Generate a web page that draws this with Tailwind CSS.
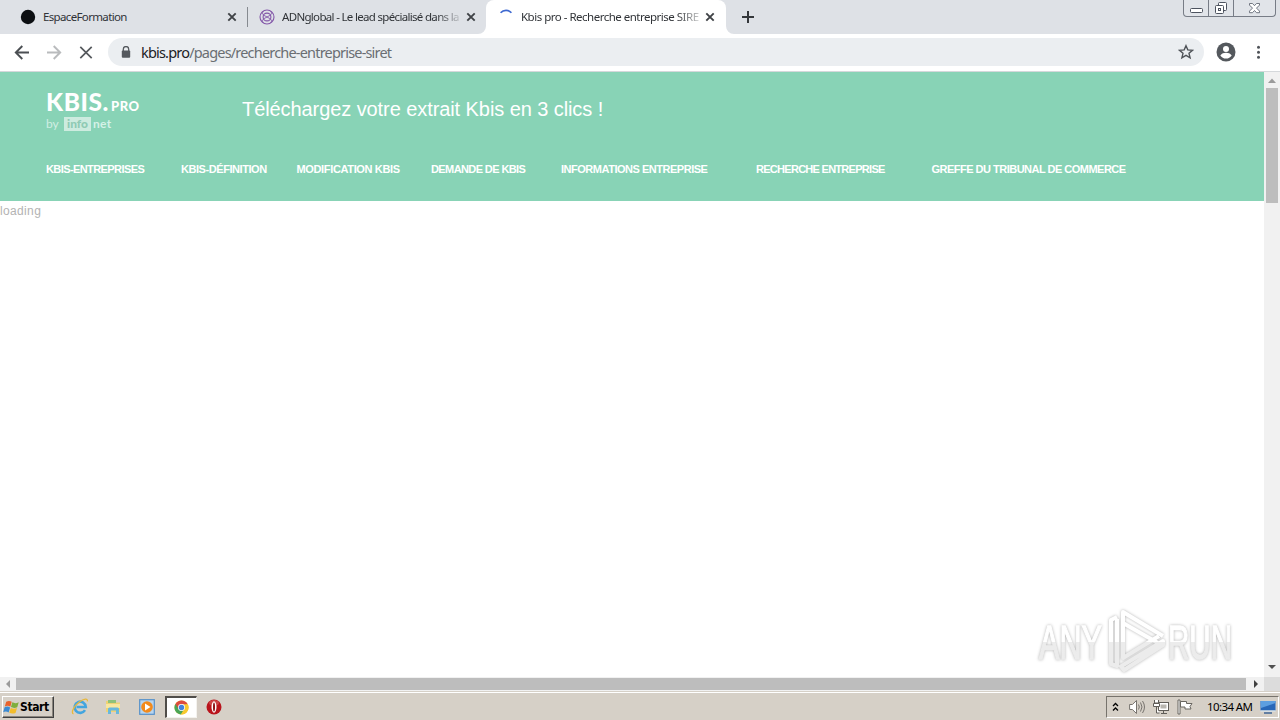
<!DOCTYPE html>
<html lang="fr">
<head>
<meta charset="utf-8">
<title>Kbis pro - Recherche entreprise SIRET</title>
<script src="https://cdn.jsdelivr.net/npm/@tailwindcss/browser@4"></script>
</head>
<body class="w-[1280px] h-[720px] overflow-hidden bg-white font-['Noto_Sans','Open_Sans',sans-serif]">
<div class="relative flex flex-col w-[1280px] h-[720px] overflow-hidden">

  <!-- Tab strip -->
  <div class="flex h-[34px] shrink-0 bg-[#dee1e6] text-[11.5px] text-[#303337]">
    <div class="flex items-center w-[247px] pl-[20px]">
      <svg class="w-4 h-4 shrink-0" viewBox="0 0 16 16"><circle cx="8" cy="8" r="7.2" fill="#0c0f12"/></svg>
      <span class="ml-[7px] w-[183px] whitespace-nowrap overflow-hidden tracking-[-0.65px]">EspaceFormation</span>
      <svg class="w-[10px] h-[10px] ml-px" viewBox="0 0 10 10"><path d="M1.3 1.3l7.4 7.4M8.7 1.3L1.3 8.7" stroke="#3f4246" stroke-width="1.9"/></svg>
    </div>
    <div class="flex items-center w-[239px]">
      <div class="w-px h-5 bg-[#868a90]"></div>
      <svg class="w-4 h-4 shrink-0 ml-[11px]" viewBox="0 0 16 16" fill="none" stroke="#8256a8" stroke-width="1.1"><circle cx="8" cy="8" r="7"/><path d="M4.200 2.200C2 5.500 5.500 6.500 8 8s6 2.500 3.800 5.800M11.800 2.200C14 5.500 10.500 6.500 8 8s-6 2.500-3.800 5.800" stroke-width=".9"/><circle cx="8" cy="8" r="3.900"/></svg>
      <span class="ml-[7px] w-[179px] whitespace-nowrap overflow-hidden tracking-[-0.68px] [mask-image:linear-gradient(to_right,black_155px,transparent_182px)]">ADNglobal - Le lead spécialisé dans la</span>
      <svg class="w-[10px] h-[10px] ml-[5px]" viewBox="0 0 10 10"><path d="M1.300 1.300l7.400 7.400M8.700 1.300L1.300 8.700" stroke="#3f4246" stroke-width="1.900"/></svg>
    </div>
    <div class="relative flex items-center w-[240px] bg-white rounded-t-[8px]">
      <svg class="absolute -left-2 bottom-0 w-2 h-2" viewBox="0 0 8 8"><path d="M8 0v8H0A8 8 0 0 0 8 0z" fill="#fff"/></svg>
      <svg class="absolute -right-2 bottom-0 w-2 h-2" viewBox="0 0 8 8"><path d="M0 0v8h8A8 8 0 0 1 0 0z" fill="#fff"/></svg>
      <svg class="w-4 h-4 ml-[12px]" viewBox="0 0 16 16"><path d="M2.600 3.800A7.300 7.300 0 0 1 13.400 3.800" fill="none" stroke="#3d68d0" stroke-width="1.700"/></svg>
      <span class="ml-[7px] w-[178px] whitespace-nowrap overflow-hidden tracking-[-0.5px] [mask-image:linear-gradient(to_right,black_155px,transparent_186px)]">Kbis pro - Recherche entreprise SIRE</span>
      <svg class="w-[10px] h-[10px] ml-[6px]" viewBox="0 0 10 10"><path d="M1.300 1.300l7.400 7.400M8.700 1.300L1.300 8.700" stroke="#3f4246" stroke-width="1.900"/></svg>
    </div>
    <svg class="w-3 h-3 ml-[16px] mt-[11px]" viewBox="0 0 12 12"><path d="M6 0v12M0 6h12" stroke="#34373b" stroke-width="2"/></svg>
    <div class="flex ml-auto mr-[4px] h-[17px] w-[93px] border border-t-0 border-[#777c86] rounded-b-[4px] bg-[#e1e4e9]">
      <div class="w-[25px] border-r border-[#777c86]"><svg class="w-6 h-4" viewBox="0 0 24 16"><rect x="6.500" y="8.500" width="12" height="4" rx="1" fill="#fff" stroke="#4d535f"/></svg></div>
      <div class="w-[25px] border-r border-[#777c86]"><svg class="w-6 h-4" viewBox="0 0 24 16" fill="#fff" stroke="#4d535f"><rect x="9.500" y="2.500" width="8" height="8" rx="1"/><rect x="6.500" y="5.500" width="8" height="8" rx="1"/><rect x="9.500" y="8.500" width="2" height="2"/></svg></div>
      <svg class="w-[41px] h-4" viewBox="0 0 41 16"><path d="M15.500 3.500h3l2 2.200 2-2.200h3v1.600l-3 3 3 3v1.600h-3l-2-2.200-2 2.200h-3v-1.600l3-3-3-3z" fill="#fff" stroke="#626874" stroke-width=".9"/></svg>
    </div>
  </div>

  <!-- Toolbar -->
  <div class="flex items-center h-[38px] shrink-0 bg-white border-b border-[#d5d8db] pl-[14px]">
    <svg class="w-4 h-4" viewBox="0 0 16 16" fill="none" stroke="#4b4f53" stroke-width="1.900"><path d="M15 7.500H2M8.300 1L1.800 7.500 8.300 14"/></svg>
    <svg class="w-4 h-4 ml-[16px]" viewBox="0 0 16 16" fill="none" stroke="#b9bbbd" stroke-width="1.900"><path d="M1 7.500h13M7.700 1l6.500 6.500L7.700 14"/></svg>
    <svg class="w-4 h-4 ml-[16px]" viewBox="0 0 16 16" fill="none" stroke="#55595d" stroke-width="1.700"><path d="M2.300 1.800l11.400 11.400M13.700 1.800L2.300 13.200"/></svg>
    <div class="flex items-center w-[1096px] h-7 ml-[14px] -mt-px rounded-full bg-[#ebeef1]">
      <svg class="w-[10px] h-3 ml-[13px]" viewBox="0 0 10 12"><path d="M2.300 5V3.200a2.700 2.700 0 0 1 5.400 0V5" fill="none" stroke="#55595e" stroke-width="1.300"/><rect x=".8" y="4.500" width="8.400" height="7.300" rx="1" fill="#55595e"/></svg>
      <span class="ml-[10px] -mt-px text-[14.5px] leading-5 tracking-[-0.81px] whitespace-nowrap text-[#6a6e73]"><span class="text-[#202124]">kbis.pro</span>/pages/recherche-entreprise-siret</span>
      <svg class="w-4 h-4 ml-auto mr-[10px]" viewBox="0 0 16 16"><path d="M8 1.700l1.800 4.200 4.700.4-3.500 3 1.100 4.500L8 11.400l-4.100 2.400L5 9.300l-3.500-3 4.700-.4z" fill="none" stroke="#4f5358" stroke-width="1.400"/></svg>
    </div>
    <svg class="w-5 h-5 ml-[12px] -mt-[2px]" viewBox="0 0 20 20"><circle cx="10" cy="10" r="9.500" fill="#54585d"/><circle cx="10" cy="7" r="3" fill="#fff"/><path d="M4.300 13.400c1.300-2 3.500-2.700 5.700-2.700s4.400.7 5.700 2.700A6.900 6.900 0 0 1 10 16.500a6.900 6.900 0 0 1-5.700-3.100z" fill="#fff"/></svg>
    <svg class="w-4 h-4 ml-[14px] -mt-px" viewBox="0 0 16 16" fill="#4f5358"><circle cx="8.500" cy="3.300" r="1.500"/><circle cx="8.500" cy="8.300" r="1.500"/><circle cx="8.500" cy="13.300" r="1.500"/></svg>
  </div>

  <!-- Page -->
  <div class="flex h-[605px] shrink-0">
    <div class="w-[1264px] font-['Liberation_Sans',Arial,sans-serif]">
      <header class="h-[129px] bg-[#88d3b6] text-white pt-[18px] pl-[46px]">
        <div class="flex h-[64px]">
          <div class="w-[196px] font-['Lato',sans-serif]">
            <div class="flex items-baseline h-[24px] leading-[24px] whitespace-nowrap"><span class="text-[24.5px] font-black tracking-[0.6px]">KBIS.</span><span class="ml-[2px] text-[13px] font-black tracking-[0.5px]">PRO</span></div>
            <div class="flex items-center mt-[2px] h-[16px] text-[12px] leading-[14px]"><span class="w-[18px] text-[#d0eee3]">by</span><span class="flex items-center justify-center w-[27px] h-[14px] bg-[#cdebdf] text-[#8fcab4] font-black">info</span><span class="ml-[2px] text-[#d5f1e7] font-bold tracking-[0.3px]">net</span></div>
          </div>
          <div class="mt-[7px] text-[20px] leading-6 tracking-[-0.08px] whitespace-nowrap">Téléchargez votre extrait Kbis en 3 clics !</div>
        </div>
        <nav class="flex mt-[8px] text-[11px] leading-[14px] font-bold whitespace-nowrap">
          <a class="w-[135px] tracking-[-0.59px]">KBIS-ENTREPRISES</a>
          <a class="w-[115.500px] tracking-[-0.44px]">KBIS-DÉFINITION</a>
          <a class="w-[134.500px] tracking-[-0.35px]">MODIFICATION KBIS</a>
          <a class="w-[130px] tracking-[-0.6px]">DEMANDE DE KBIS</a>
          <a class="w-[195px] tracking-[-0.48px]">INFORMATIONS ENTREPRISE</a>
          <a class="w-[175.500px] tracking-[-0.72px]">RECHERCHE ENTREPRISE</a>
          <a class="tracking-[-0.51px]">GREFFE DU TRIBUNAL DE COMMERCE</a>
        </nav>
      </header>
      <div class="pt-[3px] text-[12px] leading-[14px] tracking-[0.35px] text-[#b3b3b3]">loading</div>
    </div>
    <div class="flex flex-col items-center w-4 bg-[#f1f1f1]">
      <svg class="w-4 h-4" viewBox="0 0 16 16"><path d="M4 11l4-4.500L12 11z" fill="#9b9b9b"/></svg>
      <div class="w-3 h-[115px] bg-[#bdbdbd]"></div>
      <svg class="w-4 h-4 mt-auto mb-[2px]" viewBox="0 0 16 16"><path d="M4 6l4 4 4-4z" fill="#505050"/></svg>
    </div>
  </div>
  <div class="flex items-center h-[14px] shrink-0 bg-[#f1f1f1]">
    <svg class="w-4 h-[14px]" viewBox="0 0 16 14"><path d="M10 3v8L6 7z" fill="#9b9b9b"/></svg>
    <div class="w-[1230px] h-3 bg-[#bdbdbd]"></div>
    <svg class="w-[18px] h-[14px]" viewBox="0 0 18 14"><path d="M8 3v8l4-4z" fill="#404040"/></svg>
    <div class="w-4 h-[14px] bg-[#dcdcdc]"></div>
  </div>

  <!-- Taskbar -->
  <div class="flex h-[29px] shrink-0 bg-[#d6d0c7] border-t border-[#d6d0c7] shadow-[inset_0_1px_0_#fff] pt-[4px] pl-[2px]">
    <div class="flex items-center w-[52px] h-[22px] border border-t-white border-l-white border-r-[#404040] border-b-[#404040] shadow-[inset_-1px_-1px_0_#8a857d] text-[12px] font-bold text-black tracking-[-0.4px] font-['DejaVu_Sans_Condensed','DejaVu_Sans',sans-serif]">
      <svg class="w-[17px] h-[17px] shrink-0" viewBox="0 0 16 16"><path d="M3 2.500c2-1 3.600-.9 5.200.2L6.900 7.300C5.400 6.200 3.700 6.200 1.700 7z" fill="#e8622c"/><path d="M8.800 3.100c1.800 1 3.600 1.100 6 0l-1.400 4.600c-2 .9-4 .9-5.900-.1z" fill="#7fae3c"/><path d="M1.500 7.700c2-.8 3.500-.8 5.200.3l-1.400 4.700c-1.600-1.100-3.300-1.200-5.100-.3z" fill="#3b8ad2"/><path d="M7.300 8.400c2 1 3.700 1 5.900.1l-1.400 4.600c-2 .9-4 .9-5.900-.1z" fill="#f3bd2c"/></svg>
      <span>Start</span>
    </div>
    <svg class="w-[18px] h-[18px] ml-[17px] mt-[2px]" viewBox="0 0 18 18" fill="none"><path d="M14 12.200a5.600 5.600 0 1 1 .8-3.200H5.500" stroke="#43a5df" stroke-width="2.600"/><path d="M2.500 15.800C-.5 15 3 8 8 4.300s9-4.200 8.400-.9" stroke="#e9b83a" stroke-width="1.300"/></svg>
    <svg class="w-[17px] h-[18px] ml-[16px] mt-[2px]" viewBox="0 0 17 18"><path d="M1 3h5l1.500 1.500H15V14H1z" fill="#efd274"/><path d="M3 2h8v3H3z" fill="#8fc27a"/><path d="M1 6h14v4H1z" fill="#f8e7a0"/><path d="M3 16v-5q0-1.500 1.500-1.500h8Q14 9.500 14 11v5h-3v-3.500H6V16z" fill="#69b8dc"/></svg>
    <svg class="w-4 h-[18px] ml-[17px] mt-[2px]" viewBox="0 0 16 18"><rect x=".7" y="1.700" width="14.600" height="14.600" fill="#b7d5ef" stroke="#5791c9" stroke-width="1.200"/><circle cx="8" cy="9" r="5.800" fill="#f28a1c"/><path d="M6 5.500v7L11.500 9z" fill="#fff"/></svg>
    <div class="flex items-center justify-center w-8 h-[22px] ml-[10px] bg-white border-t-2 border-l-2 border-r border-b border-t-[#504d49] border-l-[#504d49] border-r-[#f4f2ee] border-b-[#f4f2ee]">
      <svg class="w-[15px] h-[15px]" viewBox="0 0 16 16"><circle cx="8" cy="8" r="7.500" fill="#f7c92f"/><path d="M8 8L1.500 4.250A7.500 7.500 0 0 1 14.500 4.250z" fill="#dd4b3e"/><path d="M8 8L1.500 4.250A7.500 7.500 0 0 0 7.300 15.500L11 9.700z" fill="#4aa557"/><path d="M1.500 4.250L5 9.700 8 5z" fill="#dd4b3e"/><path d="M8 4.600h6.700A7.500 7.500 0 0 1 7.600 15.500L11 9.700z" fill="#f7c92f"/><circle cx="8" cy="8" r="3.700" fill="#fff"/><circle cx="8" cy="8" r="2.900" fill="#4383dc"/></svg>
    </div>
    <svg class="w-4 h-[18px] ml-[9px] mt-[2px]" viewBox="0 0 16 18"><circle cx="8" cy="9" r="7.500" fill="#b9141c"/><ellipse cx="8" cy="5" rx="5" ry="3" fill="#de6a6a" opacity=".55"/><ellipse cx="8" cy="9" rx="2.500" ry="5.800" fill="#fff"/><ellipse cx="8" cy="9" rx="1" ry="4.600" fill="#8f1016"/></svg>
    <div class="flex items-center h-[22px] w-[173px] ml-auto mr-px border border-t-[#77736c] border-l-[#77736c] border-r-white border-b-white">
      <svg class="w-[7px] h-[10px] ml-[5px]" viewBox="0 0 7 10" fill="none" stroke="#000" stroke-width="1.300"><path d="M1 4l2.500-2.500L6 4M1 8.500L3.500 6 6 8.500"/></svg>
      <svg class="w-4 h-4 ml-[10px]" viewBox="0 0 16 16" fill="#fff" stroke="#77736e"><path d="M.6 5.500h2.800L7.500 1.500v13l-4.100-4H.6z"/><path d="M9.500 5.500q1.600 2.500 0 5M11.500 3.500q3 4.500 0 9M13.500 2q4 6 0 12" fill="none"/></svg>
      <svg class="w-4 h-4 ml-[8px]" viewBox="0 0 16 16" fill="#fff" stroke="#605d58"><rect x="5.500" y="3.500" width="10" height="8"/><rect x="7.500" y="5.500" width="6" height="4" fill="#b8b5af" stroke="none"/><path d="M8 14.500h6M10.500 12v2M1.500 1v3h4V1M.5 4.500h6v3h-6zM3.500 8v6h3" /></svg>
      <svg class="w-4 h-4 ml-[8px]" viewBox="0 0 16 16" fill="#fff" stroke="#696660"><path d="M1 1h2v14H1zM3.500 2.500h6v2h5.500l-2 3 1 2.500H8v-2H3.500z"/></svg>
      <span class="ml-[14px] text-[11.5px] leading-4 text-black tracking-[-0.6px] whitespace-nowrap w-[46px]">10:34 AM</span>
      <svg class="w-4 h-4 ml-[7px]" viewBox="0 0 16 16"><path d="M.5 2h15v9.500H.5z" fill="#2867b8"/><path d="M.5 2h15v2L1 9z" fill="#5d9ee0"/><path d="M.5 11.500h15v1H.5z" fill="#dcecf8"/><path d="M4 14h8" stroke="#3d6596" stroke-width="1.500"/></svg>
    </div>
  </div>

  <!-- Watermark over the page -->
  <svg class="absolute left-[1030px] top-[602px] w-[212px] h-[76px] [filter:drop-shadow(0_0_1.5px_rgba(0,0,0,0.3))]" viewBox="0 0 212 76">
    <defs>
      <linearGradient id="wm" gradientUnits="userSpaceOnUse" x1="0" y1="0" x2="0" y2="76"><stop offset="0.53" stop-color="#fff"/><stop offset="0.53" stop-color="#ececec"/></linearGradient>
    </defs>
    <g fill="url(#wm)" stroke="url(#wm)" stroke-width="1.3" font-family="Liberation Sans Narrow, Liberation Sans, sans-serif" font-size="49">
      <text x="9" y="56.500" textLength="63" lengthAdjust="spacingAndGlyphs">ANY</text>
      <text x="138" y="56.500" textLength="64" lengthAdjust="spacingAndGlyphs">RUN</text>
    </g>
    <g fill="none" stroke="url(#wm)" stroke-width="4" stroke-linejoin="round">
      <path d="M93 32V10l40 24"/>
      <path d="M93 21l35 20"/>
      <path d="M93 30v26l36-22"/>
      <path d="M87 15l-6 3v44l6 2V17"/>
      <path d="M90 63l4 5 39-25v-4L90 65"/>
    </g>
  </svg>
</div>
</body>
</html>
